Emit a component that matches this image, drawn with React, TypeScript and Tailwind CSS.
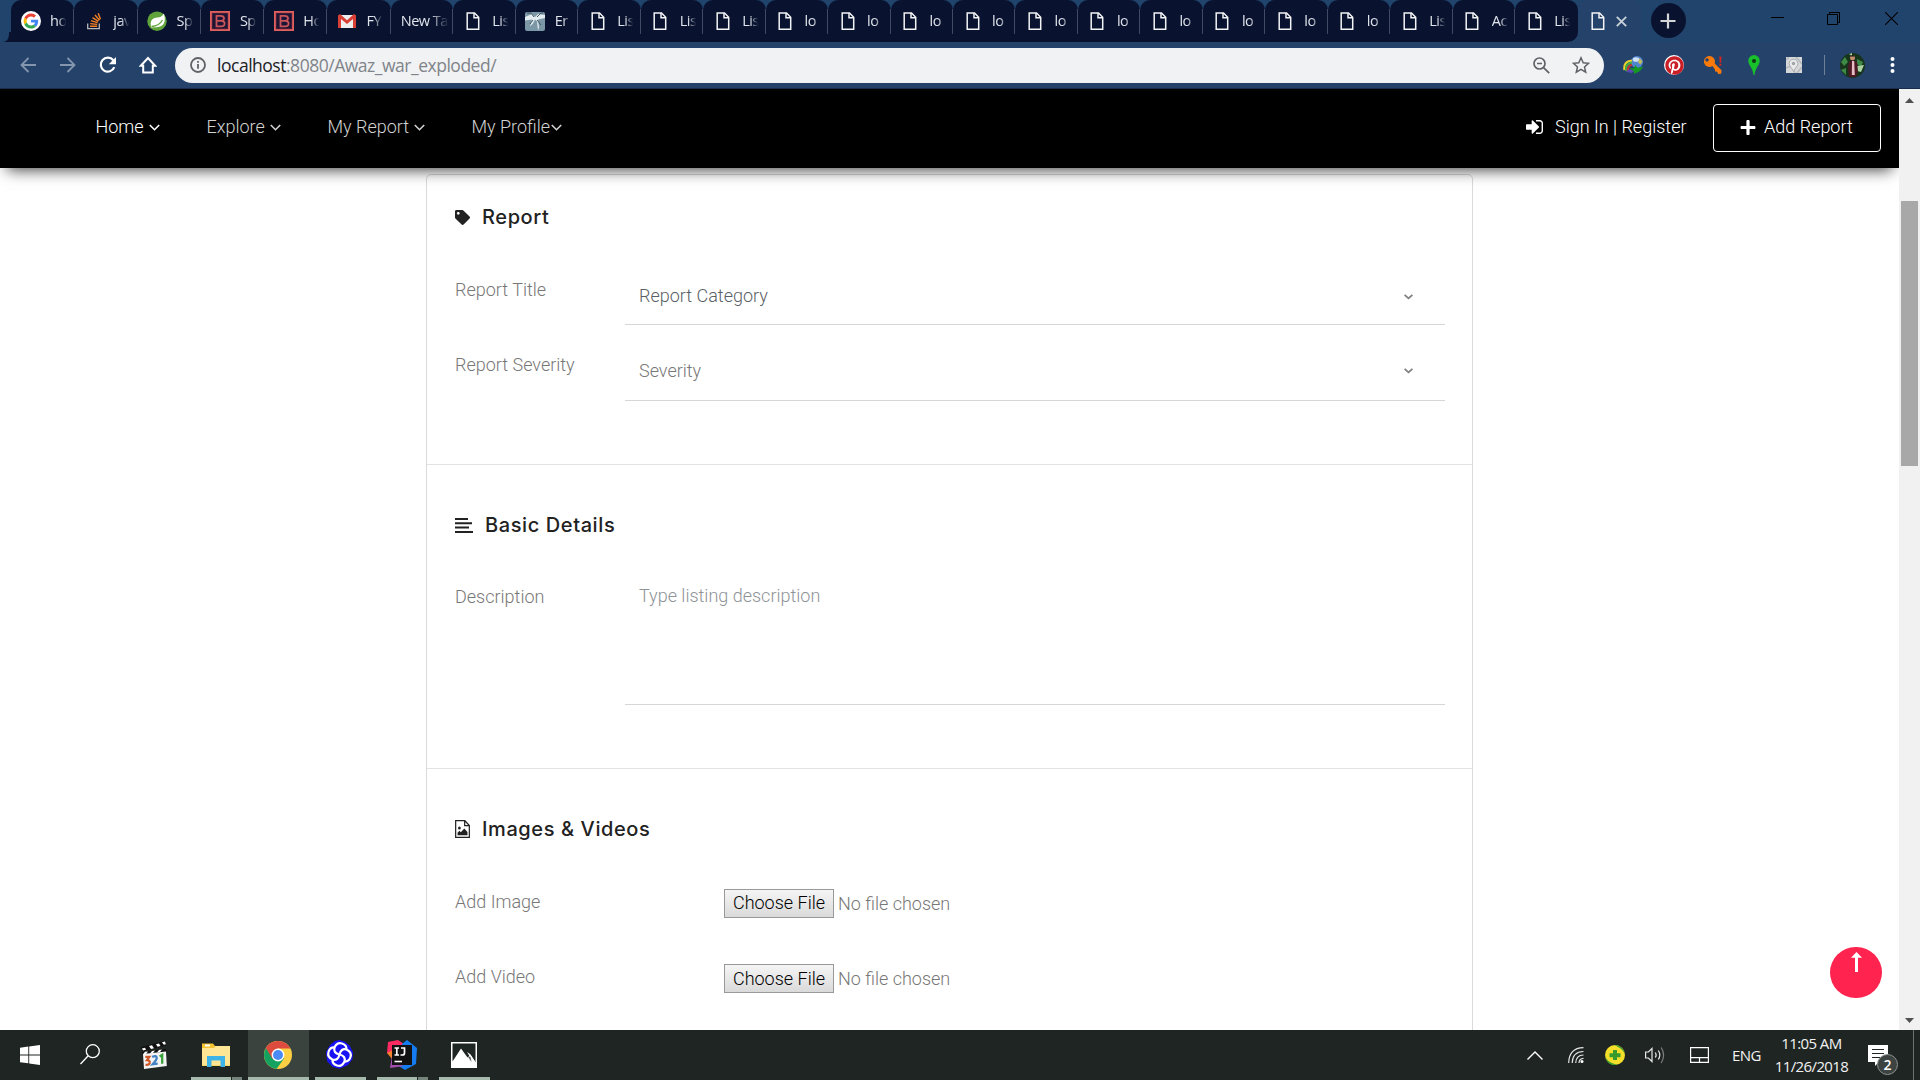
import React from "react";
import { FaPlus, FaTag, FaPinterest } from "react-icons/fa";

type Kids = { children?: React.ReactNode };

/* ---------- Tab strip ---------- */

const PageIcon = () => (
  <svg className="h-[20px] w-[20px]" viewBox="0 0 20 20" fill="none" stroke="#f3f4f6" strokeWidth="1.5">
    <path d="M4.2 1.9h7.300l4.200 4.300v12.100H4.200z" />
    <path d="M11 2v4.700h4.500" />
  </svg>
);

const GoogleIcon = () => (
  <svg className="h-[20px] w-[20px]" viewBox="0 0 20 20">
    <circle cx="10" cy="10" r="10" fill="#fff" />
    <g transform="translate(2.600 2.600) scale(.31)">
      <path fill="#ea4335" d="M24 9.500c3.540 0 6.710 1.220 9.210 3.600l6.850-6.850C35.900 2.380 30.470 0 24 0 14.620 0 6.510 5.380 2.560 13.220l7.980 6.190C12.430 13.720 17.740 9.500 24 9.500z" />
      <path fill="#4285f4" d="M46.980 24.550c0-1.570-.15-3.090-.38-4.550H24v9.020h12.940c-.58 2.960-2.260 5.480-4.780 7.180l7.730 6c4.510-4.180 7.090-10.360 7.090-17.650z" />
      <path fill="#fbbc05" d="M10.530 28.590c-.48-1.450-.76-2.990-.76-4.590s.27-3.140.76-4.590l-7.980-6.190C.92 16.460 0 20.120 0 24s.92 7.540 2.560 10.780l7.970-6.190z" />
      <path fill="#34a853" d="M24 48c6.480 0 11.930-2.130 15.890-5.810l-7.730-6c-2.150 1.450-4.920 2.300-8.160 2.300-6.260 0-11.570-4.220-13.470-9.910l-7.980 6.190C6.510 42.620 14.620 48 24 48z" />
    </g>
  </svg>
);

const StackIcon = () => (
  <svg className="h-[20px] w-[20px]" viewBox="0 0 20 20" fill="none">
    <path d="M3.700 12.500v5.200h11.600v-5.200" stroke="#b9b9b9" strokeWidth="1.300" />
    <path d="M6 15.300h7.200M6.200 12.600l7 .8M6.900 9.700l6.700 2M8.500 6.600l5.900 3.700M11 4l4.500 5.200M14.200 2.300l2.300 6" stroke="#f48024" strokeWidth="1.400" />
  </svg>
);

const SpringIcon = () => (
  <svg className="h-[20px] w-[20px]" viewBox="0 0 20 20">
    <circle cx="10" cy="10.200" r="9.700" fill="#5fa33a" />
    <path d="M16.800 2.500c.8 2.600 1.400 5 .8 7.800-1 4.200-4.300 6-8.300 5.900-2 0-3.800.1-5 .2-2-6.500 1.200-9.600 6-9.900 3.300-.2 5-1.100 6.500-4z" fill="#fff" />
    <path d="M4.500 15.500c4.500-.3 8.800-2.500 11-6.500" stroke="#5fa33a" strokeWidth="1.300" fill="none" />
  </svg>
);

const BIcon = () => (
  <svg className="h-[20px] w-[20px]" viewBox="0 0 20 20" fill="none" stroke="#e0605e">
    <rect x=".9" y=".9" width="18.200" height="18.200" strokeWidth="1.800" fill="#5c2238" />
    <rect x="2.600" y="2.600" width="14.800" height="14.800" stroke="none" fill="#1b1636" />
    <path d="M6.500 4.800h4.200q3.300 0 3.300 2.500t-2.700 2.500q3.300 0 3.300 2.800t-3.500 2.700H6.500zM6.500 9.800h5" stroke="#c9555b" strokeWidth="1.800" />
  </svg>
);

const GmailIcon = () => (
  <svg className="h-[20px] w-[20px]" viewBox="0 0 20 20">
    <path d="M2 4h16v13H2z" fill="#eee" />
    <path d="M1 17V4.500L3 3l7 6.200L17 3l2 1.500V17h-3V8l-6 5-6-5v9z" fill="#d93f35" />
  </svg>
);

const PhotoIcon = () => (
  <svg className="h-[20px] w-[20px]" viewBox="0 0 20 20">
    <rect x="0" y="1" width="20" height="19" rx="2" fill="#7c97a6" />
    <path d="M0 6l7-3 3 3 3-3 7 1v3l-7 1.500 1 8-1 3 -1-9-2-2-2 4-3 3 2-7-7 1z" fill="#e3ecef" />
    <path d="M2 2h4l3 4M12 6l4-4h2M5 13l3-4M16 14l-4-5" stroke="#3e5664" strokeWidth="1" fill="none" />
  </svg>
);

type TabInfo = { t: string; icon: React.ReactNode; w?: string };

const wide = "w-[63.300px]";

const tabs: TabInfo[] = [
  { t: "ho", icon: <GoogleIcon />, w: wide },
  { t: "jav", icon: <StackIcon />, w: wide },
  { t: "Sp", icon: <SpringIcon />, w: wide },
  { t: "Sp", icon: <BIcon />, w: wide },
  { t: "Ho", icon: <BIcon />, w: wide },
  { t: "FY", icon: <GmailIcon />, w: wide },
  { t: "New Ta", icon: null },
  { t: "Lis", icon: <PageIcon /> },
  { t: "Er", icon: <PhotoIcon /> },
  ...["Lis", "Lis", "Lis"].map((t) => ({ t, icon: <PageIcon /> })),
  ...Array.from({ length: 10 }, () => ({ t: "lo", icon: <PageIcon /> })),
  ...["Lis", "Ac", "Lis"].map((t) => ({ t, icon: <PageIcon /> })),
];

const Tab = ({ t, icon, w, last }: TabInfo & { last: boolean }) => (
  <div className={`relative flex h-[42px] shrink-0 items-center rounded-t-[10px] bg-[#09132f] ${w ?? "w-[62.480px]"} ${last ? "rounded-br-[10px]" : ""}`}>
    {icon && <span className="ml-[9.500px] w-[20px]">{icon}</span>}
    <span
      className={`whitespace-nowrap font-['Open_Sans','Noto_Sans',sans-serif] text-[14.500px] leading-[20px] tracking-[-0.5px] text-[#dfe3ea] ${icon ? "ml-[9.500px] w-[18px] [mask-image:linear-gradient(to_right,black_45%,transparent_90%)]" : "ml-[10px] w-[48px] [mask-image:linear-gradient(to_right,black_60%,transparent)]"}`}
    >
      {t}
    </span>
    {!last && <span className="absolute top-[9px] right-0 h-[25px] w-px bg-[#414a63]" />}
  </div>
);

const TabStrip = () => (
  <div className="flex h-[42px] bg-[#20446c]">
    <svg className="mt-[32px] ml-[3px] h-[10px] w-[8px] shrink-0" viewBox="0 0 8 10">
      <path d="M8 0v10H0q6-1 6-8V0z" fill="#09132f" />
    </svg>
    <div className="flex">
      {tabs.map((tab, i) => (
        <div key={i} className="flex bg-[linear-gradient(to_bottom,#20446c_50%,#09132f_50%)] last:bg-[linear-gradient(to_bottom,#20446c_50%,#25436a_50%)]">
          <Tab {...tab} last={i === tabs.length - 1} />
        </div>
      ))}
    </div>
    <div className="flex w-[63px] items-center rounded-t-[10px] bg-[#25436a]">
      <span className="ml-[10px]"><PageIcon /></span>
      <svg className="ml-[8px] h-[11px] w-[11px]" viewBox="0 0 11 11" stroke="#c9d1db" strokeWidth="1.800">
        <path d="M.8.800l9.400 9.400M10.200.800L.8 10.200" />
      </svg>
    </div>
    <div className="mt-[3px] ml-[10px] flex h-[35px] w-[35px] items-center justify-center rounded-full bg-[#09132f]">
      <svg className="h-[16px] w-[16px]" viewBox="0 0 16 16" stroke="#d3d5d9" strokeWidth="2.200">
        <path d="M8 .5v15M.5 8h15" />
      </svg>
    </div>
    <div className="ml-auto flex pt-[12px] pr-[22px]">
      <svg className="mr-[43px] h-[13px] w-[13px]" viewBox="0 0 13 13" stroke="#000"><path d="M0 5.500h13" /></svg>
      <svg className="mr-[45px] h-[13px] w-[13px]" viewBox="0 0 13 13" stroke="#000" fill="none">
        <path d="M.5 2.500h10v10H.5zM2.500 2.500v-2h10v10h-2" />
      </svg>
      <svg className="h-[13px] w-[13px]" viewBox="0 0 13 13" stroke="#000" strokeWidth="1.100"><path d="M0 0l13 13M13 0L0 13" /></svg>
    </div>
  </div>
);

/* ---------- Toolbar ---------- */

const Toolbar = () => (
  <div className="flex h-[47px] items-center border-b border-[#182c4c] bg-[#25436a]">
    <svg className="ml-[20px] h-[16px] w-[16px]" viewBox="0 0 16 16" fill="none" stroke="#8396ae" strokeWidth="1.800">
      <path d="M16 8H1.500M8.500 1L1.500 8l7 7" />
    </svg>
    <svg className="ml-[24px] h-[16px] w-[16px]" viewBox="0 0 16 16" fill="none" stroke="#8396ae" strokeWidth="1.800">
      <path d="M0 8h14.500M7.500 1l7 7-7 7" />
    </svg>
    <svg className="ml-[23px] h-[18px] w-[18px]" viewBox="0 0 18 18" fill="none" stroke="#fff" strokeWidth="2.200">
      <path d="M14.300 4.300A7 7 0 1 0 15.300 11.200" />
      <path d="M17 1v7.200H9.800z" fill="#fff" stroke="none" />
    </svg>
    <svg className="ml-[22px] h-[18px] w-[18px]" viewBox="0 0 18 18" fill="none" stroke="#fff" strokeWidth="2">
      <path d="M1.800 9.800L9 2l7.200 7.800h-2.400v6.700H4.200V9.800z" />
    </svg>
    <div className="ml-[18px] flex h-[35px] w-[1429px] items-center rounded-full bg-[#f1f2f4]">
      <svg className="ml-[15px] h-[16px] w-[16px]" viewBox="0 0 16 16" fill="none" stroke="#5f6368" strokeWidth="1.800">
        <circle cx="8" cy="8" r="7" />
        <path d="M8 7v4.800M8 3.900v1.900" />
      </svg>
      <span className="ml-[11px] whitespace-nowrap font-['Open_Sans','Noto_Sans',sans-serif] text-[17.500px] leading-[24px] tracking-[-0.480px] text-[#808489]">
        <span className="text-[#202124]">localhost</span>:8080/Awaz_war_exploded/
      </span>
      <svg className="ml-auto h-[17px] w-[17px]" viewBox="0 0 17 17" fill="none" stroke="#5f6368" strokeWidth="1.700">
        <circle cx="6.500" cy="6.500" r="5.500" />
        <path d="M10.600 10.600l5.600 5.600M4 6.500h5" />
      </svg>
      <svg className="mr-[14px] ml-[22px] h-[18px] w-[18px]" viewBox="0 0 18 18" fill="none" stroke="#5f6368" strokeWidth="1.500">
        <path d="M9 1.800l2.200 5 5.300.5-4 3.600 1.200 5.300L9 13.400l-4.700 2.800 1.200-5.300-4-3.600 5.300-.5z" />
      </svg>
    </div>
    <svg className="ml-[19px] h-[20px] w-[21px]" viewBox="0 0 21 20">
      <circle cx="14" cy="7" r="6" fill="#5084cf" />
      <ellipse cx="13" cy="4.500" rx="3.200" ry="2.300" fill="#cfe1f5" />
      <path d="M16.500 3l3 3.500-2 3-2.500-2z" fill="#c2bb5c" />
      <g fill="none" strokeWidth="2.200">
        <path d="M1.500 15Q0 6.500 9 5.500" stroke="#ecd02c" />
        <path d="M3.200 16Q2 8.500 9 7.700" stroke="#3fae45" />
        <path d="M5 16.500Q4 11 9 9.800" stroke="#c43a33" />
      </g>
      <path d="M6 13l5 .5 1-3.500 3 3 5.500-1.500-3.500 4.500-6 3v-2.500z" fill="#149a22" />
      <path d="M3 16.500l4-2.500 4 2.500-3 1.500z" fill="#5a48b8" />
    </svg>
    <span className="ml-[20px] flex h-[20px] w-[20px] items-center justify-center rounded-full bg-white">
      <FaPinterest className="h-[19px] w-[19px] text-[#cb1f27]" />
    </span>
    <svg className="ml-[19px] h-[20px] w-[20px]" viewBox="0 0 20 20">
      <path d="M6.500 1a5.500 5.500 0 1 1-.1 0zM4 3.200a1.700 1.700 0 1 0 .1 0z" fill="#fb7a09" fillRule="evenodd" />
      <path d="M8.500 9.500l2-2.300 8 8-.3 3.500-3 .3-1-2.200-2-.2-.3-2z" fill="#fb7a09" />
      <path d="M16.200 1.500h2.300l-.5 6.300h-1.300zM16.400 8.800h1.900v2h-1.900z" fill="#d8231f" />
    </svg>
    <svg className="ml-[25px] h-[20px] w-[12px]" viewBox="0 0 12 20">
      <path d="M6 0a5.700 5.700 0 0 1 5.700 5.900C11.700 10 7.500 12 6.500 20h-1C4.500 12 .3 10 .3 5.900A5.700 5.700 0 0 1 6 0z" fill="#18c02c" />
      <circle cx="6" cy="6" r="2" fill="#0c3512" />
    </svg>
    <svg className="ml-[26px] h-[16px] w-[16px]" viewBox="0 0 16 16">
      <path d="M0 0h16v16H0z" fill="#d5d7d9" />
      <path d="M0 11l6-3 3 8M10 0l6 7M11 16l5-6M0 3l3-3" stroke="#b5b8bb" strokeWidth="1.500" fill="none" />
      <path d="M7.500 2.200a4.300 4.300 0 0 1 4.300 4.300c0 3-3 4.500-4.300 8-1.300-3.500-4.300-5-4.300-8a4.300 4.300 0 0 1 4.300-4.300z" fill="#e9eaeb" stroke="#a3a7aa" strokeWidth=".9" />
      <circle cx="7.500" cy="6.500" r="1.700" fill="#a0a4a8" />
    </svg>
    <span className="ml-[22px] h-[20px] w-px bg-[#6d819b]" />
    <svg className="ml-[15px] h-[25px] w-[25px] rounded-full" viewBox="0 0 25 25">
      <path d="M0 0h25v25H0z" fill="#17351d" />
      <path d="M1 9l4-5 3 5-4 4zM17 6l6 3-2 5-4-3zM1 17l5-2v7z" fill="#3f8a46" />
      <path d="M17 13l7-1-3 7-4-1zM9 1l3-1v3z" fill="#a9d3a2" />
      <path d="M9 9l3-2 5 2 1 9-2 6H9L8 15z" fill="#4b1a25" />
      <path d="M12 8h2.200l.6 14h-3z" fill="#e8bcc3" />
      <circle cx="12.500" cy="4.700" r="2.500" fill="#c58e6c" />
      <path d="M10 4q2.500-4 5 0l-1-.5h-3z" fill="#111" />
    </svg>
    <svg className="ml-[25px] h-[16px] w-[5px]" viewBox="0 0 5 16" fill="#fff">
      <circle cx="2.500" cy="2" r="2" /><circle cx="2.500" cy="8" r="2" /><circle cx="2.500" cy="14" r="2" />
    </svg>
  </div>
);

/* ---------- Site header ---------- */

const Angle = ({ className }: { className?: string }) => (
  <svg className={`h-[7px] w-[11px] ${className ?? ""}`} viewBox="0 0 11 7" fill="none" stroke="currentColor" strokeWidth="1.600">
    <path d="M.8 1l4.700 4.700L10.200 1" />
  </svg>
);

const Header = () => (
  <header className="relative z-10 flex h-[79px] shrink-0 bg-black font-['Roboto',sans-serif] text-[18px] leading-[28px] font-light text-[#d2d2d2] shadow-[0_9px_14px_-7px_rgba(0,0,0,0.75)]">
    <nav className="mt-[24px] flex h-[28px] items-center whitespace-nowrap">
      <span className="ml-[95.500px] w-[48px] text-white">Home</span>
      <Angle className="ml-[5px] text-white" />
      <span className="ml-[47px] w-[58px]">Explore</span>
      <Angle className="ml-[5px]" />
      <span className="ml-[47px] w-[81px]">My Report</span>
      <Angle className="ml-[5px]" />
      <span className="ml-[47px] w-[79px]">My Profile</span>
      <Angle />
    </nav>
    <div className="mt-[15px] ml-auto flex h-[48px] items-center whitespace-nowrap text-white">
      <svg className="-mt-[2px] h-[14px] w-[17px]" viewBox="0 256 1536 1280" preserveAspectRatio="none" fill="currentColor">
        <path d="M1184 896q0 26-19 45l-544 544q-19 19-45 19t-45-19-19-45V1152H64q-26 0-45-19t-19-45V704q0-26 19-45t45-19h448V352q0-26 19-45t45-19 45 19l544 544q19 19 19 45zm352-352v704q0 119-84.500 203.500T1248 1536H928q-13 0-22.500-9.500T896 1504q0-50 5-76t27-20h320q66 0 113-47t47-113V544q0-66-47-113t-113-47H928q-26 0-30-28-4-50 2-80 6-20 28-20h320q119 0 203.500 84.500T1536 544z" />
      </svg>
      <span className="-mt-[2px] ml-[12px] w-[158px]">Sign In | Register</span>
      <div className="mr-[18px] flex h-[48px] w-[168px] items-center rounded-[4px] border border-white">
        <FaPlus className="-mt-[2px] ml-[26px] h-[17px] w-[16px]" />
        <span className="-mt-[2px] ml-[8px]">Add Report</span>
      </div>
    </div>
  </header>
);

/* ---------- Form ---------- */

const SectionTitle = ({ icon, children }: Kids & { icon: React.ReactNode }) => (
  <h3 className="flex h-[24px] items-center whitespace-nowrap font-['Inter',sans-serif] text-[20px] leading-[24px] font-[450] tracking-[0.600px] text-[#222]">
    {icon}
    {children}
  </h3>
);

const SelectBox = ({ children, className }: Kids & { className: string }) => (
  <div className={`flex w-[820px] items-center border-b border-[#d6d6d6] pl-[14px] ${className}`}>
    <span>{children}</span>
    <svg className="mt-px mr-[32px] ml-auto h-[6px] w-[9px]" viewBox="0 0 9 6" fill="none" stroke="#808080" strokeWidth="1.800">
      <path d="M.6.800l3.900 3.600L8.400.800" />
    </svg>
  </div>
);

const FileInput = ({ textClass }: { textClass: string }) => (
  <div className="mt-px ml-[98px] flex h-[29px] items-start">
    <button className="flex h-[29px] w-[110px] justify-center border border-[#999] bg-linear-to-b from-[#f5f5f5] to-[#dadada] font-light text-black">
      <span className={textClass}>Choose File</span>
    </button>
    <span className={`mt-px ml-[4px] ${textClass}`}>No file chosen</span>
  </div>
);

const FormCard = () => (
  <main className="mt-[6px] ml-[426px] w-[1047px] rounded-t-[5px] border border-[#dadada] whitespace-nowrap font-['Roboto',sans-serif] text-[18px] leading-[28px] font-light text-[#777]">
    <section className="h-[290px] border-b border-[#e3e3e3] pt-[30px] pl-[28px]">
      <SectionTitle icon={<FaTag className="mr-[12px] h-[15px] w-[15px]" />}>Report</SectionTitle>
      <div className="mt-[21px] flex h-[75px]">
        <span className="w-[170px] pt-[26px]">Report Title</span>
        <SelectBox className="pt-[18px] text-[#5a5f66]">Report Category</SelectBox>
      </div>
      <div className="flex h-[76px]">
        <span className="w-[170px] pt-[26px]">Report Severity</span>
        <SelectBox className="pt-[16px]">Severity</SelectBox>
      </div>
    </section>
    <section className="h-[304px] border-b border-[#e3e3e3] pt-[48px] pl-[28px]">
      <SectionTitle
        icon={
          <svg className="mr-[12px] h-[15px] w-[18px]" viewBox="0 0 18 15" fill="currentColor">
            <path d="M0 0h13v2H0zM0 4.300h17v2H0zM0 8.600h14v2H0zM0 12.900h18v2H0z" />
          </svg>
        }
      >
        Basic Details
      </SectionTitle>
      <div className="flex h-[168px]">
        <span className="w-[170px] pt-[46px]">Description</span>
        <div className="w-[820px] border-b border-[#d6d6d6] pt-[45px] pl-[14px] text-[#8e9398]">Type listing description</div>
      </div>
    </section>
    <section className="h-[270px] pt-[48px] pl-[28px]">
      <SectionTitle
        icon={
          <svg className="mr-[12px] h-[18px] w-[15px]" viewBox="0 0 16 18" preserveAspectRatio="none" fill="none" stroke="currentColor" strokeWidth="1.300">
            <path d="M.7.700h9.800l4.800 4.800v11.800H.7zM10.300.900v4.800h4.800" />
            <path d="M2.700 15.200v-2.400l2-2 1.500 1.500 3.700-3.800 3.400 3.400v3.300z" fill="currentColor" stroke="none" />
            <circle cx="4.700" cy="7.900" r="1.500" fill="currentColor" stroke="none" />
          </svg>
        }
      >
        Images &amp; Videos
      </SectionTitle>
      <div className="mt-[47px] flex h-[75px] items-start">
        <span className="w-[171px]">Add Image</span>
        <FileInput textClass="-mt-px" />
      </div>
      <div className="flex h-[75px] items-start">
        <span className="w-[171px]">Add Video</span>
        <FileInput textClass="mt-0" />
      </div>
    </section>
  </main>
);

const ScrollBar = () => (
  <div className="flex w-[21px] shrink-0 flex-col items-center bg-[#f1f1f1]">
    <svg className="mt-[9px] h-[5px] w-[9px] shrink-0" viewBox="0 0 9 5" fill="#505050"><path d="M4.500 0L9 5H0z" /></svg>
    <span className="mt-[98px] h-[265px] w-[17px] bg-[#a8a8a8]" />
    <svg className="mt-auto mb-[7px] h-[5px] w-[9px] shrink-0" viewBox="0 0 9 5" fill="#505050"><path d="M0 0h9L4.500 5z" /></svg>
  </div>
);

/* ---------- Taskbar ---------- */

const Task = ({ children, className, bar, split }: Kids & { className: string; bar?: boolean; split?: boolean }) => (
  <div className={`flex h-[50px] flex-col items-center ${className}`}>
    <div className={`flex h-[47px] items-center justify-center pt-[2px] ${bar ? "pr-[2px]" : ""}`}>{children}</div>
    {bar && (
      <div className="flex h-[3px] w-full">
        <span className="grow bg-[#a6b9ad]" />
        {split && <span className="ml-px w-[10px] bg-[#75857b]" />}
      </div>
    )}
  </div>
);

const TaskBar = () => (
  <footer className="flex h-[50px] bg-[#1f2522] font-['Open_Sans','Noto_Sans',sans-serif] text-[#f2f2f2]">
    <Task className="w-[60px]">
      <svg className="h-[20px] w-[20px]" viewBox="0 0 20 20" fill="#fff">
        <path d="M0 2.800l8.300-1.200v7.900H0zM9.200 1.400L20 0v9.500H9.200zM0 10.400h8.300v7.900L0 17.200zM9.200 10.400H20V20L9.200 18.500z" />
      </svg>
    </Task>
    <Task className="w-[60px]">
      <svg className="h-[21px] w-[20px]" viewBox="0 0 20 21" fill="none" stroke="#fff" strokeWidth="1.300">
        <circle cx="12.800" cy="7.200" r="6.500" /><path d="M8 12L.5 20" />
      </svg>
    </Task>
    <Task className="ml-[20px] w-[28px]">
      <svg className="h-[28px] w-[27px]" viewBox="0 0 27 28">
        <path d="M0 6l24-6 1 4.500L1.500 10.500z" fill="#111" />
        <path d="M1 7.500l3-.8 1 2-3 .8zM8 5l3-.8 2 3-3 .8zM15 3.200l3-.8 1.500 2.500-3 .8zM21 1.300l3-.8.8 2.800-2 .4z" fill="#fff" />
        <path d="M1 11l24-3 .3 3L1 13.500z" fill="#111" />
        <path d="M4 10.800l3-.4-2 2.500-3 .4zM11 9.900l3-.4-2 2.500-3 .4zM18 9l3-.4-2 2.500-3 .4z" fill="#fff" />
        <path d="M2 13l23-2.500.8 14.500L3 28z" fill="#f4f4f4" />
        <g fill="none" strokeWidth="2.300">
          <path d="M4.300 15.800h4l-2.300 3.400q3 0 2.700 2.700-.4 2.400-4.200 2" stroke="#d0582a" />
          <path d="M11.200 16q4.500-2.300 4.500 1 0 2-4 6.200l5-.5" stroke="#4281c4" />
          <path d="M18.700 15.500l2.500-1.700v9" stroke="#3aa13a" />
        </g>
      </svg>
    </Task>
    <Task className="ml-[23px] w-[51px]" bar split>
      <svg className="h-[24px] w-[28px]" viewBox="0 0 28 24">
        <path d="M0 .5h11l2 2.500h15v20H0z" fill="#f3c332" />
        <path d="M3 1.500h5v2H3z" fill="#fff" />
        <path d="M0 5h12l1.500-2H28v19.500H0z" fill="#ffe695" />
        <path d="M5 13h18v11h-4.500v-6.500h-9V24H5z" fill="#3eb3e8" />
      </svg>
    </Task>
    <Task className="ml-[6px] w-[61px] bg-[#3a433e]" bar>
      <svg className="h-[28px] w-[28px]" viewBox="0 0 28 28">
        <circle cx="14" cy="14" r="14" fill="#fdd043" />
        <path d="M14 14L1.900 7A14 14 0 0 0 12.500 27.900L20 17.500z" fill="#13a260" />
        <path d="M14 7.500H26.400A14 14 0 0 0 1.900 7L8.500 18z" fill="#dd4b3e" />
        <circle cx="14" cy="14" r="6.400" fill="#fff" />
        <circle cx="14" cy="14" r="5" fill="#4a8af4" />
      </svg>
    </Task>
    <Task className="ml-[6px] w-[51px]" bar>
      <svg className="h-[29px] w-[29px]" viewBox="0 0 29 29" fill="none" stroke="#fff" strokeWidth="2.200">
        <path d="M14.500 0l5 1.500 5 4 3.500 6.500-.5 7-4.500 6-8.500 3.800-7-1.800-5.500-6L1 12l4-7 5-4z" fill="#1912f5" stroke="none" />
        <path d="M14.500 14.500Q8 13 9.500 7.500 12 2 17 3.500q5 1.500 4.500 6.500" />
        <path d="M14.500 14.500Q16 8 21.500 9.500 27 12 25.500 17q-1.500 5-6.500 4.500" />
        <path d="M14.500 14.500Q21 16 19.500 21.500 17 27 12 25.500q-5-1.500-4.500-6.500" />
        <path d="M14.500 14.500Q13 21 7.500 19.500 2 17 3.500 12q1.500-5 6.500-4.500" />
      </svg>
    </Task>
    <Task className="ml-[11px] w-[51px]" bar split>
      <svg className="h-[30px] w-[30px]" viewBox="0 0 30 30">
        <path d="M1 2l10-2 6 4-3 12L0 13z" fill="#fb2a63" />
        <path d="M0 13l8-4 3 6-6 4z" fill="#f6812d" />
        <path d="M15 4l5-4 10 8-1 16-11 6-8-5z" fill="#147cf0" />
        <path d="M3 28l2-12 6 8 6 2z" fill="#a44fae" />
        <path d="M5 5h20v20H5z" fill="#111" />
        <path d="M7.500 8h4.500M9.800 8v7M7.500 15h4.500M14 8h3.500v5q0 2-2 2h-2" stroke="#fff" strokeWidth="1.700" fill="none" />
        <path d="M7.500 21.500h7.500" stroke="#fff" strokeWidth="1.600" />
      </svg>
    </Task>
    <Task className="ml-[11px] w-[51px]" bar>
      <svg className="h-[26px] w-[26px]" viewBox="0 0 26 26">
        <path d="M0 0h26v26H0z" fill="#fff" />
        <path d="M1.500 1.500h23v19l-5-8-3 3-6.500-9-8.500 13z" fill="#1f2522" />
        <path d="M16 10l3 2 5.500 8v4z" fill="#fff" />
        <path d="M16.500 14l4 6-1-5z" fill="#555" />
      </svg>
    </Task>

    <div className="ml-auto flex items-center">
      <svg className="h-[9px] w-[16px]" viewBox="0 0 16 9" fill="none" stroke="#fff" strokeWidth="1.400"><path d="M.5 8.500L8 1l7.500 7.500" /></svg>
      <svg className="ml-[25px] h-[16px] w-[16px]" viewBox="0 0 16 16" fill="none" stroke="#e6e6e6" strokeWidth="1.200">
        <path d="M.7 16Q1 1 15.500.7M4.200 16Q4.500 4.700 15.500 4.500M7.700 16Q8 8.200 15.500 8M11 16q.2-4.500 4.500-4.700" />
        <circle cx="14" cy="14.500" r="1.500" fill="#fff" stroke="none" />
      </svg>
      <svg className="ml-[21px] h-[20px] w-[20px]" viewBox="0 0 20 20">
        <circle cx="10" cy="10" r="10" fill="#f6df2b" />
        <path d="M9 0q9 0 11 9-3-6-11-9zM0 10q2 8 12 9.700Q2 22 0 10z" fill="#3ea02e" />
        <path d="M8 5h4v3.200h3.500v4H12V15H8v-2.800H4.500v-4H8z" fill="#379a2c" />
      </svg>
      <svg className="ml-[20px] h-[18px] w-[20px]" viewBox="0 0 20 18" fill="none" stroke="#e8e8e8" strokeWidth="1.200">
        <path d="M.6 6v6h2.800l3.600 3.500v-13L3.400 6z" />
        <path d="M10.300 6.500q1.700 2.500 0 5M13.300 4.500q3 4.500 0 9" />
        <path d="M16.200 1.500q4.800 7.500 0 15.500" stroke="#7d8380" />
      </svg>
      <svg className="ml-[25px] h-[16px] w-[19px]" viewBox="0 0 19 16" fill="none" stroke="#fff" strokeWidth="1.200">
        <path d="M.6.600h17.800v14.800H.6zM.6 10.600h17.800M9.500 10.600v5" />
      </svg>
      <span className="ml-[23px] w-[31px] text-[15px] leading-[20px] tracking-[-0.600px]">ENG</span>
      <div className="ml-[9px] flex w-[79px] flex-col items-center whitespace-nowrap text-[15px] leading-[23px] tracking-[-0.600px]">
        <span>11:05 AM</span>
        <span>11/26/2018</span>
      </div>
      <div className="relative ml-[17px] h-[50px] w-[32px]">
        <svg className="mt-[15px] h-[21px] w-[20px]" viewBox="0 0 20 21">
          <path d="M0 0h20v17h-9l-4 4v-4H0z" fill="#fff" />
          <path d="M4 4.500h12M4 8.500h12M4 12.500h8" stroke="#1f2522" strokeWidth="1.100" />
        </svg>
        <span className="absolute top-[24px] left-[9px] flex h-[21px] w-[21px] items-center justify-center rounded-full border border-[#8d9390] bg-[#3c4340] text-[14px] leading-none font-semibold text-white">2</span>
      </div>
      <span className="ml-[13px] h-[50px] w-px bg-[#6b716e]" />
      <span className="w-[6px]" />
    </div>
  </footer>
);

export default function App() {
  return (
    <div className="h-[1080px] w-[1920px] overflow-hidden bg-white">
      <TabStrip />
      <Toolbar />
      <div className="flex h-[941px]">
        <div className="relative flex w-[1899px] flex-col overflow-hidden">
          <Header />
          <FormCard />
          <div className="absolute top-[858px] left-[1830px] flex h-[51px] w-[52px] justify-center rounded-full bg-[#ff2350] pt-[5px]">
            <svg className="h-[20px] w-[11px]" viewBox="0 0 11 20" fill="#fff">
              <path d="M5.500 0L11 5.700H7V20H4V5.700H0z" />
            </svg>
          </div>
        </div>
        <ScrollBar />
      </div>
      <TaskBar />
    </div>
  );
}
